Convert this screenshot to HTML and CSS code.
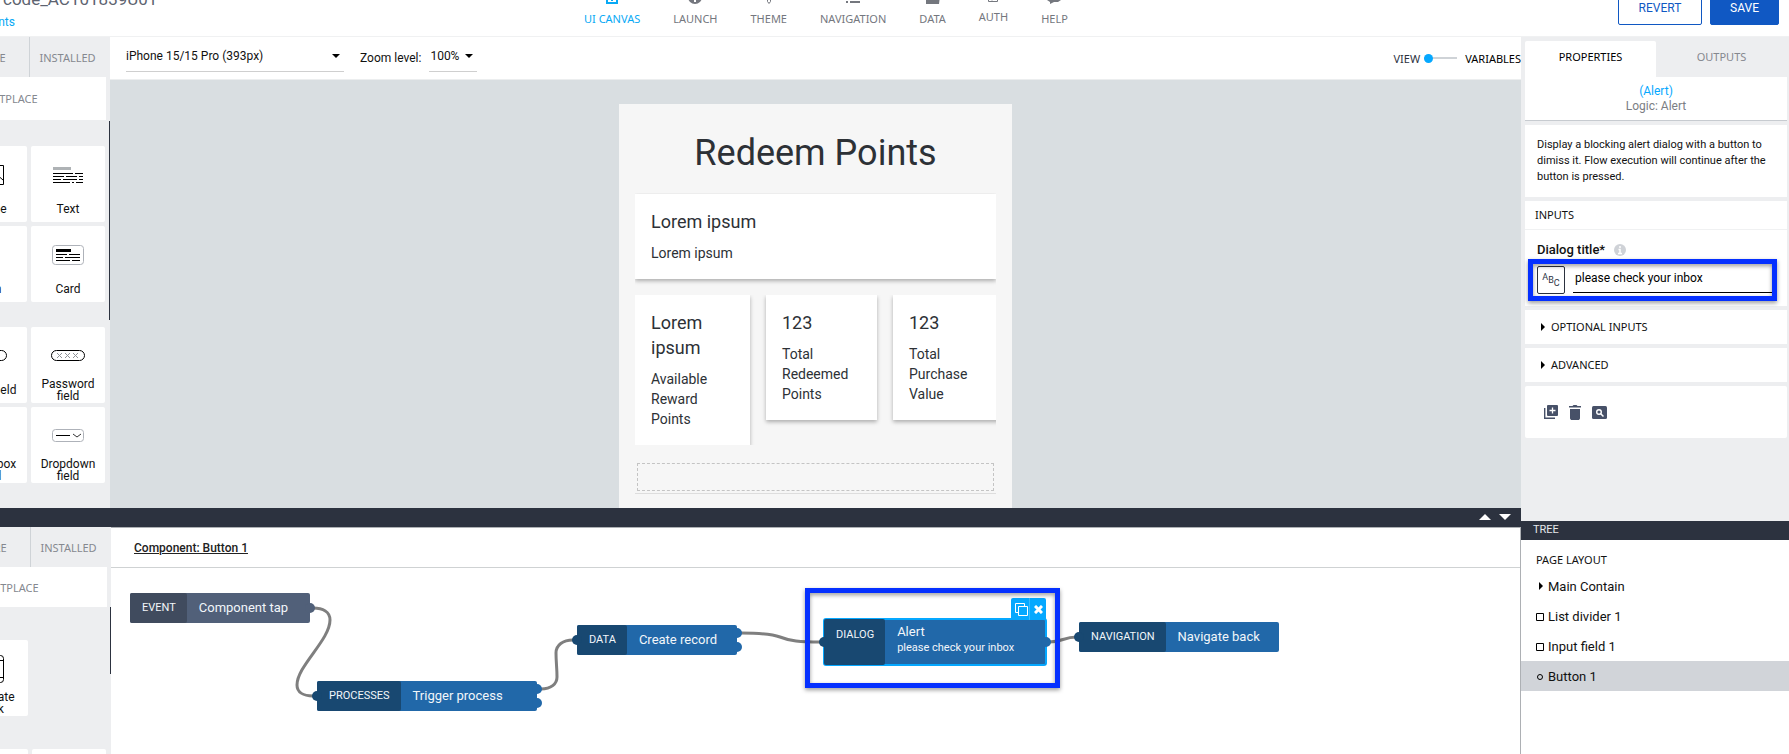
FILE: index.html
```html
<!DOCTYPE html>
<html lang="en">
<head>
<meta charset="utf-8">
<title>Composer</title>
<link rel="stylesheet" href="styles.css">
</head>
<body>
<div class="app">
  <header class="topbar">
    <div class="project">
      <div class="project-name">code_AC101839U01</div>
      <div class="project-page"><a href="#">Points</a></div>
    </div>
    <nav class="mainnav caps">
      <a class="active" href="#"><svg width="14" height="14" viewBox="0 0 14 14" fill="none" stroke="currentColor" stroke-width="2"><path d="M2 1h10v12H2zM7 4v7"/></svg>UI CANVAS</a>
      <a href="#"><svg width="14" height="14" viewBox="0 0 14 14"><circle cx="7" cy="7" r="7" fill="currentColor"/><path d="M7 3v9" stroke="#fff" stroke-width="2"/></svg>LAUNCH</a>
      <a href="#"><svg width="14" height="16" viewBox="0 0 14 16" fill="none" stroke="currentColor"><path d="M5.500 0v13.500L7 15.500l1.500-2V0"/></svg>THEME</a>
      <a href="#"><svg width="14" height="14" viewBox="0 0 14 14" stroke="currentColor" stroke-width="2"><path d="M0 7h2M4 7h10M0 12h2M4 12h10"/></svg>NAVIGATION</a>
      <a href="#"><svg width="14" height="14" viewBox="0 0 14 14" fill="currentColor"><path d="M0 1h5l1 2h7v3h1l-1 8H0z"/></svg>DATA</a>
      <a class="raised" href="#"><svg width="14" height="14" viewBox="0 0 14 14" fill="none" stroke="currentColor"><path d="M2.500 .5h9v13h-9zM5 11.500h4M6 9.500l-2 1 2 2"/></svg>AUTH</a>
      <a href="#"><svg width="14" height="14" viewBox="0 0 14 14" fill="currentColor"><path d="M0 2h14v8l-3 2H7l-4 2v-2L0 10z"/></svg>HELP</a>
    </nav>
    <div class="actions">
      <button class="btn" type="button">REVERT</button>
      <button class="btn primary" type="button">SAVE</button>
    </div>
  </header>

  <div class="workspace">
    <div class="left">
      <section class="upper">
        <aside class="palette">
          <div class="tabs caps"><button type="button">CORE</button><button type="button">INSTALLED</button></div>
          <button class="market caps" type="button">MARKETPLACE</button>
          <div class="cards first">
            <div class="card"><svg width="32" height="20" viewBox="0 0 32 20" fill="none" stroke="#000"><path d="M1.500 .5h28v19h-28zM2 17l8-8 6 6 5-7 8 7"/></svg><span>Image</span></div>
            <div class="card"><svg width="30" height="16" viewBox="0 0 30 16" stroke="#000"><path d="M0 1.500h18" stroke="#aeb2b5" stroke-width="3"/><path d="M0 6.500h20M22 6.500h8M0 9.500h11M13 9.500h11M26 9.500h4M0 12.500h8M10 12.500h14M26 12.500h4M0 15.500h17M19 15.500h2M23 15.500h7"/></svg><span>Text</span></div>
            <div class="card"><svg width="14" height="20" viewBox="0 0 14 20" fill="none" stroke="#000"><circle cx="7" cy="10" r="6"/></svg><span>Icon</span></div>
            <div class="card"><svg width="32" height="20" viewBox="0 0 32 20" fill="none" stroke="#000"><rect x=".5" y=".5" width="31" height="19" rx="3" stroke="#aeb2b9"/><path d="M4 5.500h15" stroke-width="3"/><path d="M4 9.500h11M17 9.500h11M4 12.500h7M13 12.500h15M4 15.500h14M20 15.500h8"/></svg><span>Card</span></div>
          </div>
          <div class="cards">
            <div class="card"><svg width="34" height="11" viewBox="0 0 34 11" fill="none" stroke="#000"><rect x=".5" y=".5" width="33" height="10" rx="5"/></svg><span>Input field</span></div>
            <div class="card two"><svg width="34" height="11" viewBox="0 0 34 11" fill="none" stroke="#000"><rect x=".5" y=".5" width="33" height="10" rx="5"/><path stroke="#8f9398" d="M6 3l5 5m0-5l-5 5M14 3l5 5m0-5l-5 5M22 3l5 5m0-5l-5 5"/></svg><span>Password field</span></div>
            <div class="card two"><svg width="14" height="12" viewBox="0 0 14 12" fill="none" stroke="#000"><path d="M1 .5h11v11H1z"/></svg><span>Checkbox field</span></div>
            <div class="card two"><svg width="32" height="13" viewBox="0 0 32 13" fill="none" stroke="#000"><rect x=".5" y=".5" width="31" height="12" rx="3" stroke="#aeb2b9"/><path d="M4 6.500h14"/><path d="M21 5l4 3 4-3" stroke="#333"/></svg><span>Dropdown field</span></div>
          </div>
        </aside>
        <div class="stage">
          <div class="toolbar">
            <button class="picker device" type="button" aria-label="Device">iPhone 15/15 Pro (393px)<i class="caret"></i></button>
            <span class="zoom-label">Zoom level:</span>
            <button class="picker" type="button" aria-label="Zoom level">100%<i class="caret"></i></button>
            <label class="mode caps"><span>VIEW</span><input type="range" min="0" max="1" value="0"><span class="dark">VARIABLES</span></label>
          </div>
          <div class="canvas">
            <div class="phone">
              <h1>Redeem Points</h1>
              <div class="tile-row"><div class="tile wide"><h2>Lorem ipsum</h2><p>Lorem ipsum</p></div></div>
              <div class="tile-row three">
                <div class="tile tall"><h2>Lorem ipsum</h2><p>Available Reward Points</p></div>
                <div class="tile"><h2>123</h2><p>Total Redeemed Points</p></div>
                <div class="tile"><h2>123</h2><p>Total Purchase Value</p></div>
              </div>
              <div class="dropzone"><div></div></div>
            </div>
          </div>
        </div>
      </section>

      <div class="splitter">
        <button type="button" aria-label="Expand"><svg width="12" height="6" viewBox="0 0 12 6"><path d="M0 6l6-6 6 6z" fill="#fff"/></svg></button>
        <button type="button" aria-label="Collapse"><svg width="12" height="6" viewBox="0 0 12 6"><path d="M0 0l6 6 6-6z" fill="#fff"/></svg></button>
      </div>

      <section class="lower">
        <aside class="palette logic">
          <div class="tabs caps"><button type="button">CORE</button><button type="button">INSTALLED</button></div>
          <button class="market caps" type="button">MARKETPLACE</button>
          <div class="cards">
            <div class="card two"><svg width="26" height="28" viewBox="0 0 26 28" fill="none" stroke="#000"><rect x=".5" y=".5" width="25" height="27" rx="3"/><path d="M1 5.500h25M1 22.500h25"/></svg><span>Navigate back</span></div>
          </div>
          <div class="cards"><div class="card"></div><div class="card"></div></div>
        </aside>
        <div class="flow">
          <div class="flow-head"><a href="#">Component: Button 1</a></div>
          <div class="board">
            <svg class="edges" width="1200" height="186" viewBox="0 0 1200 186" fill="none" stroke="#7f7f7f" stroke-width="3">
              <path d="M202 40C212 40 219 44 219 52C219 72 186 98 186 117C186 124 192 128 202 128"/>
              <path d="M430 121C440 121 446 116 446 109C446 100 445 94 445 85C445 77 452 72 462 72"/>
              <path d="M630 65C650 65 661 66 669 69C679 73 688 74 710 74"/>
              <path d="M938 74C952 74 952 69 966 69"/>
            </svg>
            <div class="node event n1"><b>EVENT</b><span>Component tap</span><i class="port out"></i></div>
            <div class="node n2"><b>PROCESSES</b><span>Trigger process</span><i class="port in"></i><i class="port up"></i><i class="port down"></i></div>
            <div class="node n3"><b>DATA</b><span>Create record</span><i class="port in"></i><i class="port up"></i><i class="port down"></i></div>
            <div class="node n4 selected"><b>DIALOG</b><span>Alert<small>please check your inbox</small></span><i class="port in"></i><i class="port out"></i>
              <div class="node-tools">
                <button type="button" aria-label="Duplicate"><svg width="13" height="13" viewBox="0 0 13 13" fill="none" stroke="#fff"><path d="M3.500 3.500h9v9h-9zM3 9.500H.5v-9h9V3"/></svg></button>
                <button type="button" aria-label="Remove"><svg width="9" height="9" viewBox="0 0 9 9" stroke="#fff" stroke-width="3"><path d="M1 1l7 7M8 1L1 8"/></svg></button>
              </div>
            </div>
            <div class="node n5"><b>NAVIGATION</b><span>Navigate back</span><i class="port in"></i></div>
            <div class="callout on-node"></div>
          </div>
        </div>
      </section>
    </div>

    <aside class="inspector">
      <div class="props">
        <div class="prop-tabs caps"><button class="on" type="button">PROPERTIES</button><button type="button">OUTPUTS</button></div>
        <div class="subject"><strong>(Alert)</strong><span>Logic: Alert</span></div>
        <p class="desc">Display a blocking alert dialog with a button to dimiss it. Flow execution will continue after the button is pressed.</p>
        <div class="inputs">
          <h3 class="caps">INPUTS</h3>
          <div class="field">
            <label for="dialog-title">Dialog title*<svg width="12" height="12" viewBox="0 0 12 12"><circle cx="6" cy="6" r="6" fill="#cfd2d7"/><path d="M6 2v2M4.500 5.500h1.500V9M4 9.500h4" stroke="#fff" stroke-width="1.500" fill="none"/></svg></label>
            <div class="field-row">
              <button class="binding" type="button" aria-label="Text binding"><i>A</i><i>B</i><i>C</i></button>
              <input id="dialog-title" type="text" value="please check your inbox">
              <div class="callout on-field"></div>
            </div>
          </div>
        </div>
        <button class="fold caps" type="button"><i class="tri"></i>OPTIONAL INPUTS</button>
        <button class="fold caps" type="button"><i class="tri"></i>ADVANCED</button>
        <div class="prop-tools">
          <button type="button" aria-label="Duplicate"><svg width="14" height="14" viewBox="0 0 14 14"><path d="M.7 3v10.300H11" fill="none" stroke="#475168" stroke-width="1.400"/><rect x="3" width="11" height="11" rx="1" fill="#475168"/><path d="M8.500 2.500v6M5.500 5.500h6" stroke="#fff" stroke-width="1.300"/></svg></button>
          <button type="button" aria-label="Delete"><svg width="12" height="15" viewBox="0 0 12 15" fill="#475168"><path d="M0 1h3.500l1-1h3l1 1H12v1.500H0zM1 4h10v9.500l-1 1.500H2l-1-1.500z"/></svg></button>
          <button type="button" aria-label="Inspect"><svg width="15" height="13" viewBox="0 0 15 13"><rect width="15" height="13" rx="1.500" fill="#475168"/><circle cx="7" cy="6" r="2.300" fill="none" stroke="#fff" stroke-width="1.400"/><path d="M8.500 7.500l3 3" stroke="#fff" stroke-width="1.500"/></svg></button>
        </div>
      </div>
      <div class="tree-bar">TREE</div>
      <div class="tree">
        <h3 class="caps">PAGE LAYOUT</h3>
        <ul>
          <li><svg width="9" height="9" viewBox="0 0 9 9"><path d="M3 0l4 4-4 4z"/></svg><a href="#">Main Contain</a></li>
          <li><svg width="9" height="9" viewBox="0 0 9 9" fill="none" stroke="#000"><path d="M.5 1.500h7v7h-7z"/></svg><a href="#">List divider 1</a></li>
          <li><svg width="9" height="9" viewBox="0 0 9 9" fill="none" stroke="#000"><path d="M.5 1.500h7v7h-7z"/></svg><a href="#">Input field 1</a></li>
          <li class="on"><svg width="9" height="9" viewBox="0 0 9 9" fill="none" stroke="#000"><circle cx="4" cy="5" r="2.500"/></svg><a href="#">Button 1</a></li>
        </ul>
      </div>
    </aside>
  </div>
</div>
</body>
</html>
```
FILE: styles.css
```css
* { box-sizing: border-box; }
body { margin: 0; font-family: Roboto, "Noto Sans", sans-serif; font-size: 12px; color: #111; background: #fff; }
button { font: inherit; color: inherit; background: none; border: 0; padding: 0; margin: 0; cursor: pointer; }
a { color: inherit; text-decoration: none; }
h1, h2, h3, p, ul { margin: 0; padding: 0; font-weight: 400; }
i, b { font-style: normal; font-weight: 400; }
svg { display: block; flex: none; }
.caps { font-family: "Noto Sans", sans-serif; font-size: 11px; }

.app { height: 100vh; display: flex; flex-direction: column; overflow: hidden; }
.topbar { flex: none; height: 37px; border-bottom: 1px solid #f0f1f2; display: flex; align-items: flex-end; overflow: hidden; }
.project { flex: none; width: 584px; padding-bottom: 5px; }
.project-name { font-size: 17px; line-height: 20px; margin-bottom: 4px; padding-left: 3px; color: #5d6370; }
.project-page { display: flex; justify-content: flex-end; width: 15px; line-height: 18px; color: #08a9f5; }
.mainnav { display: flex; gap: 33px; align-items: flex-end; padding-bottom: 10px; color: #74777e; line-height: 14px; }
.mainnav a { display: flex; flex-direction: column; align-items: center; gap: 8px; }
.mainnav .active { color: #08a9f5; }
.mainnav .raised { padding-bottom: 2px; }
.actions { display: flex; gap: 8px; margin-left: auto; padding: 0 10px 11px 0; }
.btn { width: 84px; height: 34px; border: 1px solid #1058c3; border-radius: 2px; color: #1058c3; background: #fff; }
.btn.primary { width: 69px; background: #1058c3; color: #fff; }

.workspace { flex: 1; min-height: 0; display: flex; }
.left { flex: 1; min-width: 0; display: flex; flex-direction: column; }
.upper { flex: none; height: 471px; display: flex; overflow: hidden; }
.lower { flex: 1; min-height: 0; display: flex; }

.palette { flex: none; width: 110px; background: #edeef0; overflow: hidden; position: relative; display: flex; flex-direction: column; align-items: flex-end; }
.palette::after { content: ""; position: absolute; right: 0; top: 84px; width: 1px; height: 199px; background: #2c323f; }
.tabs { flex: none; display: flex; height: 40px; padding-right: 5px; color: #85888f; }
.tabs button { width: 76px; border-left: 1px solid #cfd3d7; }
.market { flex: none; width: 212px; height: 43px; margin-right: 4px; background: #fff; color: #85888f; }
.cards { flex: none; display: grid; grid-template-columns: 74px 74px; gap: 4px; padding: 25px 5px 0 0; }
.cards.first { padding-top: 26px; }
.card { height: 76px; background: #fff; border-radius: 2px; display: grid; grid-template-rows: 57px 12px; justify-items: center; text-align: center; font-size: 12px; line-height: 12px; }
.card svg { align-self: center; }
.card.two span { width: min-content; margin-top: -6px; }
.logic { width: 111px; }
.logic .market { height: 40px; }
.logic::after { top: 80px; height: 67px; }
.logic .cards { padding-top: 33px; }

.stage { flex: 1; min-width: 0; display: flex; flex-direction: column; }
.toolbar { flex: none; height: 43px; padding-left: 16px; border-bottom: 1px solid #eceeef; display: flex; align-items: center; }
.picker { display: flex; align-items: center; justify-content: space-between; gap: 6px; height: 29px; margin-top: -1px; padding: 0 4px 3px 1px; border-bottom: 1px solid #cfcfcf; }
.device { width: 218px; padding-left: 0; margin-right: 16px; }
.zoom-label { margin-right: 8px; }
.caret { border: 4px solid transparent; border-top-color: #000; border-bottom: 0; }
.mode { margin-left: auto; display: flex; align-items: center; gap: 4px; color: #2c323f; }
.mode .dark { color: #000; margin-left: 4px; }
.mode input { appearance: none; width: 33px; height: 9px; margin: 0; background: linear-gradient(#cfd3d7, #cfd3d7) center / 100% 2px no-repeat; }
.mode input::-webkit-slider-thumb { appearance: none; width: 9px; height: 9px; border-radius: 50%; background: #05a8ff; }
.canvas { flex: 1; background: #d9dee1; padding-top: 24px; display: flex; justify-content: center; }
.phone { width: 393px; background: #f6f6f6; padding: 16px; color: #2d3136; }
.phone h1 { font-size: 36px; line-height: 66px; text-align: center; margin-bottom: 7px; }
.tile-row { overflow: hidden; padding: 1px 0 16px; }
.tile-row.three { display: flex; align-items: flex-start; gap: 16px; padding: 0; }
.tile { flex: none; width: 111px; padding: 15px 16px 16px; background: #fff; box-shadow: 0 2px 4px rgba(0,0,0,.3); }
.tile.wide { width: auto; }
.tile.tall { width: 115px; }
.tile h2 { font-size: 18px; line-height: 25px; margin-bottom: 9px; }
.tile p { font-size: 14px; line-height: 20px; }
.dropzone { margin-top: 16px; padding: 2px; border-bottom: 1px solid #ddd; }
.dropzone div { height: 28px; border: 1px dashed #c4c4c4; }

.splitter { flex: none; height: 19px; background: #2c323f; display: flex; justify-content: flex-end; align-items: center; gap: 8px; padding: 0 10px 2px 0; }
.flow { flex: 1; min-width: 0; display: flex; flex-direction: column; border-top: 1px solid #adb0b4; border-right: 1px solid #adb0b4; }
.flow-head { flex: none; height: 40px; display: flex; align-items: center; padding-left: 23px; border-bottom: 1px solid #cfd2d3; font-weight: 500; }
.flow-head a { text-decoration: underline; color: #222; }
.board { flex: 1; position: relative; overflow: hidden; }
.edges { position: absolute; left: 0; top: 0; }
.node { position: absolute; display: flex; height: 30px; background: #2168a9; color: #f2f6fa; border-radius: 2px; font-size: 13px; line-height: 16px; }
.node b { display: flex; align-items: center; padding: 0 11px 0 12px; font-size: 11px; background: #184871; border-radius: 2px; }
.node > span { padding: 7px 12px; white-space: nowrap; }
.node.event { background: #516079; }
.event b { background: #404b5e; }
.n1 { left: 19px; top: 25px; width: 180px; }
.n2 { left: 206px; top: 113px; width: 220px; }
.n3 { left: 466px; top: 57px; width: 160px; }
.n4 { left: 713px; top: 51px; width: 222px; height: 46px; }
.n5 { left: 968px; top: 54px; width: 200px; }
.n4.selected { box-shadow: inset 0 0 0 1px #05a8ff, 0 0 0 1px #05a8ff; }
.n4 b { align-items: flex-start; padding-top: 8px; }
.n4 > span { padding-top: 5px; }
.n4 small { display: block; font-size: 11px; }
.port { position: absolute; width: 10px; height: 10px; border-radius: 50%; background: #2168a9; right: -5px; }
.port.in { left: -5px; top: calc(50% - 5px); background: #184871; }
.port.out { top: calc(50% - 5px); }
.event .port { background: #516079; }
.port.up { top: 3px; }
.port.down { bottom: 3px; }
.node-tools { position: absolute; right: 0; top: -21px; display: flex; width: 35px; height: 22px; background: #05a8ff; border-radius: 2px 2px 0 0; }
.node-tools button { width: 17px; display: flex; align-items: center; justify-content: center; }
.node-tools button:first-child { width: 18px; padding-left: 2px; }
.node-tools button + button { border-left: 1px solid #3ab9fa; }
.callout { position: absolute; border: 5px solid #0530ff; pointer-events: none; filter: drop-shadow(0 2px 2px rgba(0,0,0,.4)); }
.on-node { left: 694px; top: 20px; width: 255px; height: 100px; }

.inspector { flex: none; width: 268px; display: flex; flex-direction: column; }
.props { flex: none; height: 484px; background: #edeef0; padding: 4px 2px 0 4px; display: flex; flex-direction: column; gap: 4px; }
.prop-tabs { display: flex; height: 36px; margin-bottom: -4px; color: #85888f; }
.prop-tabs button { flex: 1; padding-bottom: 5px; }
.prop-tabs .on { background: #fff; color: #000; border-radius: 2px 2px 0 0; }
.subject { height: 44px; padding-top: 7px; background: #fff; border-bottom: 1px solid #c7cbd0; text-align: center; line-height: 15px; color: #7b7e84; }
.subject strong { display: block; font-weight: 400; color: #05a8ff; }
.desc { background: #fff; padding: 12px; height: 72px; font-size: 11px; line-height: 16px; }
.inputs { background: #fff; height: 105px; }
.inputs h3 { height: 29px; line-height: 28px; padding-left: 10px; border-bottom: 1px solid #f0f1f2; }
.field { padding: 12px 12px 0; }
.field label { display: flex; align-items: center; gap: 9px; font-weight: 500; font-size: 13px; line-height: 16px; }
.field-row { position: relative; display: flex; gap: 8px; margin-top: 8px; }
.binding { flex: none; width: 28px; height: 28px; border: 1px solid #2c323f; border-radius: 2px; display: flex; justify-content: center; align-items: flex-start; font-size: 9px; line-height: 10px; color: #2c323f; }
.binding i { margin-top: 5px; }
.binding i + i { margin-top: 8px; }
.binding i + i + i { margin-top: 11px; }
.field-row input { flex: 1; min-width: 0; height: 27px; border: 0; border-bottom: 1px solid #000; padding: 0 2px 2px; font: inherit; background: none; outline: none; color: #000; }
.on-field { left: -9px; right: -2px; top: -7px; height: 42px; }
.fold { height: 34px; background: #fff; display: flex; align-items: center; gap: 6px; padding: 0 0 1px 16px; }
.tri { border: 4px solid transparent; border-left-color: #000; border-right: 0; }
.prop-tools { height: 52px; background: #fff; border-radius: 2px; display: flex; align-items: center; gap: 11px; padding-left: 19px; }
.tree-bar { flex: none; height: 19px; background: #2c323f; color: #e6e8eb; font-size: 11px; line-height: 17px; padding-left: 12px; }
.tree { flex: 1; background: #fff; }
.tree h3 { line-height: 16px; padding: 12px 15px 3px; }
.tree ul { list-style: none; }
.tree li { height: 30px; display: flex; align-items: center; gap: 3px; padding-left: 15px; font-size: 13px; }
.tree .on { background: #d1d4d9; }
```
